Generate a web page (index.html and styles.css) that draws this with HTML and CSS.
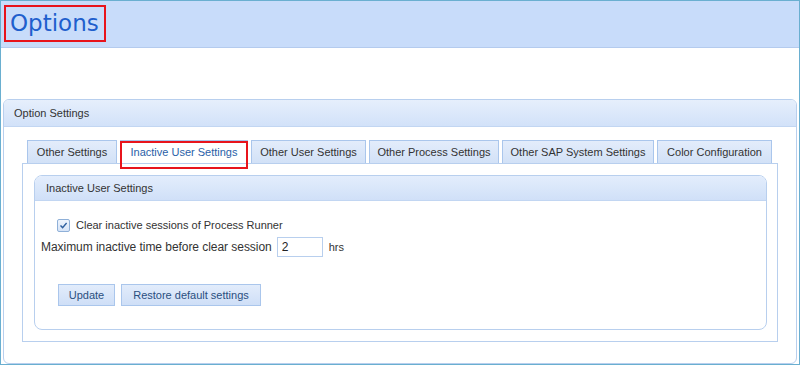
FILE: index.html
```html
<!DOCTYPE html>
<html lang="en">
  <head>
    <meta charset="UTF-8" />
    <meta name="viewport" content="width=device-width, initial-scale=1.0" />
    <title>Options</title>
    <link rel="stylesheet" href="styles.css">
  </head>
  <body>
    <div class="window">
      <div class="page-header">
        <h1 class="page-title">Options</h1>
      </div>

      <div class="panel">
        <div class="panel-header">Option Settings</div>
        <div class="panel-body">
          <ul class="tabs">
            <li class="tab tab-other">Other Settings</li>
            <li class="tab tab-inactive active">Inactive User Settings</li>
            <li class="tab tab-user">Other User Settings</li>
            <li class="tab tab-process">Other Process Settings</li>
            <li class="tab tab-sap">Other SAP System Settings</li>
            <li class="tab tab-color">Color Configuration</li>
          </ul>
          <div class="tab-content">
            <div class="group">
              <div class="group-header">Inactive User Settings</div>
              <div class="group-body">
                <label class="check-row">
                  <span class="checkbox">
                    <svg width="9" height="9" viewBox="0 0 9 9"><path d="M1.5 4.5 L3.6 6.6 L7.6 2" fill="none" stroke="#2d5f9e" stroke-width="1.4"/></svg>
                  </span>
                  Clear inactive sessions of Process Runner
                </label>
                <div class="time-row">
                  <span class="time-label">Maximum inactive time before clear session</span>
                  <input type="text" class="time-input" value="2" />
                  <span class="unit">hrs</span>
                </div>
                <div class="button-row">
                  <button class="btn btn-update">Update</button>
                  <button class="btn btn-restore">Restore default settings</button>
                </div>
              </div>
            </div>
          </div>
        </div>
      </div>
    </div>
  </body>
</html>
```

FILE: styles.css
```css
body {
  margin: 0;
  background-color: #ffffff;
  font-family: "Liberation Sans", Arial, sans-serif;
  font-size: 11px;
  color: #333333;
}

.window {
  width: 800px;
  height: 365px;
  box-sizing: border-box;
  border: 1px solid #6aafd0;
  overflow: hidden;
}

.page-header {
  height: 47px;
  background-color: #c8dcfa;
  border-bottom: 1px solid #b4cbee;
  padding: 4px 0 0 3px;
  box-sizing: border-box;
}

.page-title {
  display: inline-block;
  margin: 0;
  width: 102px;
  height: 37px;
  box-sizing: border-box;
  border: 2px solid #e8141c;
  padding: 0 0 0 4px;
  font-family: "DejaVu Sans", "Liberation Sans", sans-serif;
  font-weight: normal;
  font-size: 23px;
  line-height: 32px;
  color: #1f5fcd;
}

.panel {
  margin: 51px 2px 0 2px;
  height: 265px;
  box-sizing: border-box;
  border: 1px solid #b8cfee;
  border-radius: 6px;
  overflow: hidden;
}

.panel-header {
  height: 27px;
  line-height: 27px;
  padding-left: 10px;
  background: linear-gradient(#e6effc, #d2e2f9);
  border-bottom: 1px solid #c2d6f2;
  box-sizing: border-box;
}

.panel-body {
  padding: 13px 18px 0 18px;
}

.tabs {
  display: flex;
  gap: 3px;
  margin: 0 0 0 5px;
  padding: 0;
  list-style: none;
}

.tab {
  height: 23px;
  line-height: 23px;
  box-sizing: border-box;
  border: 1px solid #aac6ec;
  border-bottom: none;
  background: linear-gradient(#e3ecfb, #d2e1f7);
  text-align: center;
  white-space: nowrap;
}

.tab-other { width: 90px; }
.tab-inactive { width: 128px; }
.tab-user { width: 115px; }
.tab-process { width: 130px; }
.tab-sap { width: 152px; }
.tab-color { width: 115px; }

.tab.active {
  position: relative;
  background: #ffffff;
  color: #2a5fa8;
}

.tab.active::after {
  content: "";
  position: absolute;
  left: -1px;
  right: -1px;
  top: 0;
  bottom: -6px;
  border: 2px solid #e8141c;
}

.tab-content {
  height: 179px;
  box-sizing: border-box;
  border: 1px solid #b8cfee;
  padding: 11px 10px 0 11px;
}

.group {
  height: 155px;
  box-sizing: border-box;
  border: 1px solid #b8cfee;
  border-radius: 8px;
  overflow: hidden;
}

.group-header {
  height: 25px;
  line-height: 25px;
  padding-left: 11px;
  background: linear-gradient(#e3edfc, #d0e0f8);
  border-bottom: 1px solid #c2d6f2;
  box-sizing: border-box;
}

.group-body {
  padding: 16px 0 0 6px;
}

.check-row {
  display: flex;
  align-items: center;
  height: 16px;
  margin-left: 16px;
}

.checkbox {
  display: inline-flex;
  align-items: center;
  justify-content: center;
  width: 11px;
  height: 11px;
  margin-right: 6px;
  border: 1px solid #8fb0d8;
  background: linear-gradient(#eef4fd, #d6e4f7);
  border-radius: 2px;
}

.time-row {
  display: flex;
  align-items: center;
  margin-top: 4px;
  height: 20px;
}

.time-label {
  font-size: 12px;
  letter-spacing: -0.05px;
}

.time-input {
  width: 46px;
  height: 20px;
  box-sizing: border-box;
  margin: 0 6px 0 5px;
  border: 1px solid #b8cfee;
  padding: 0 4px;
  font-family: "Liberation Sans", Arial, sans-serif;
  font-size: 12px;
  color: #222222;
}

.button-row {
  display: flex;
  gap: 6px;
  margin: 27px 0 0 17px;
}

.btn {
  height: 22px;
  box-sizing: border-box;
  border: 1px solid #aac6ec;
  background: linear-gradient(#e2ecfb, #cfdff7);
  font-family: "Liberation Sans", Arial, sans-serif;
  font-size: 11px;
  color: #2a4f80;
  padding: 0;
}

.btn-update {
  width: 57px;
}

.btn-restore {
  width: 140px;
}
```
